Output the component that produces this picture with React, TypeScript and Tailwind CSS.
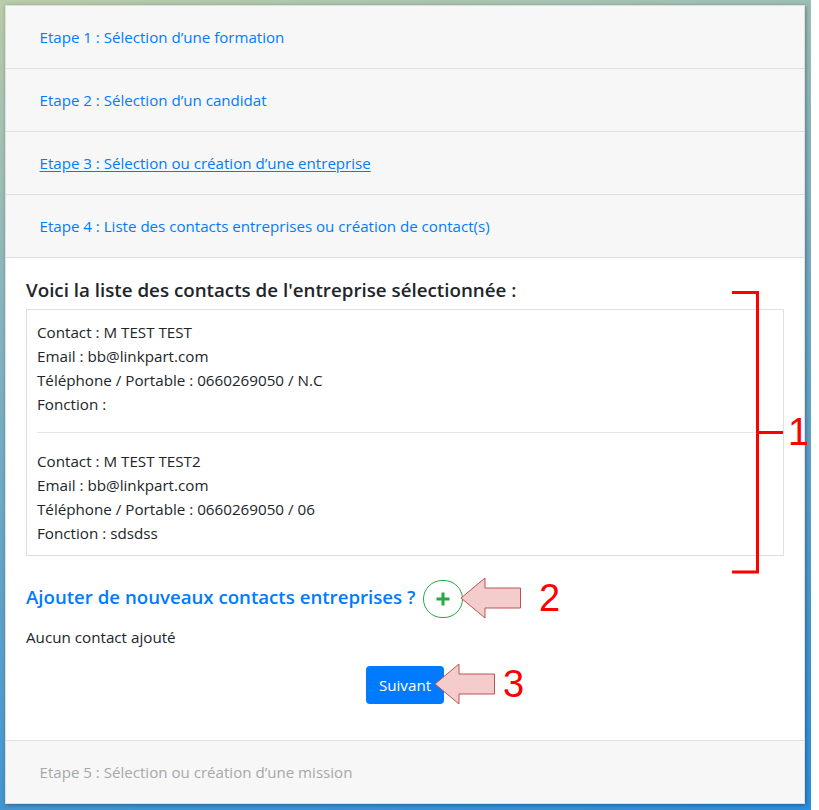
import React from 'react';

const fontClass = "font-['Open_Sans','Noto_Sans',sans-serif]";

const StepHeader: React.FC<{ label: string; underline?: boolean; disabled?: boolean; last?: boolean }> = ({
  label,
  underline,
  disabled,
  last,
}) => (
  <div
    className={`flex h-[63px] items-center bg-[#f7f7f7] pl-[33.5px] text-[15.1px] ${
      last ? 'border-t border-[#dfdfdf]' : 'border-b border-[#dfdfdf]'
    } ${disabled ? 'text-[#a6a8aa]' : 'text-[#007bff]'} ${underline ? 'underline underline-offset-2' : ''}`}
  >
    {label}
  </div>
);

const ContactLines: React.FC<{ lines: string[] }> = ({ lines }) => (
  <div className="flex flex-col">
    {lines.map((line) => (
      <p key={line} className="h-6 text-[15.2px] leading-6 text-[#212529]">
        {line}
      </p>
    ))}
  </div>
);

const Annotations: React.FC = () => (
  <>
    <svg className="absolute left-0 top-0" width="819" height="810" fill="none">
      <path d="M732 292.5H757.5V572H732M757.5 432.5H783" stroke="#ff0000" strokeWidth="3" />
      <path
        d="M461 598L485 578V588H520.5V608H485V618Z"
        fill="#f4cccc"
        stroke="#b85450"
        strokeWidth="1"
      />
      <path
        d="M435 684L459 664V674H494.5V694H459V704Z"
        fill="#f4cccc"
        stroke="#b85450"
        strokeWidth="1"
      />
    </svg>
    <span className="absolute left-[788px] top-[411px] font-['Liberation_Sans',sans-serif] text-[38px] leading-[42px] text-[#ff0000]">
      1
    </span>
    <span className="absolute left-[539px] top-[577px] font-['Liberation_Sans',sans-serif] text-[38px] leading-[42px] text-[#ff0000]">
      2
    </span>
    <span className="absolute left-[503px] top-[663px] font-['Liberation_Sans',sans-serif] text-[38px] leading-[42px] text-[#ff0000]">
      3
    </span>
  </>
);

export default function App() {
  return (
    <div className={`relative h-[810px] w-[819px] bg-white ${fontClass}`}>
      <div className="h-[810px] w-[811px] bg-[linear-gradient(168deg,#b9cca8_0%,#8ab5bd_30%,#3f94d2_85%,#2a8fe0_100%)] pl-[5px] pt-[5px]">
        <div className="flex h-[799px] w-[800px] flex-col border border-[#dfdfdf] bg-white shadow-[1px_1px_4px_rgba(0,0,0,0.35)]">
          <StepHeader label="Etape 1 : Sélection d’une formation" />
          <StepHeader label="Etape 2 : Sélection d’un candidat" />
          <StepHeader label="Etape 3 : Sélection ou création d’une entreprise" underline />
          <StepHeader label="Etape 4 : Liste des contacts entreprises ou création de contact(s)" />
          <div className="flex flex-1 flex-col px-5 pt-5">
            <h5 className="mb-[7px] text-[18.75px] font-semibold leading-6 text-[#212529]">
              Voici la liste des contacts de l'entreprise sélectionnée :
            </h5>
            <div className="border border-[#dfdfdf] p-[10px]">
              <ContactLines
                lines={[
                  'Contact : M TEST TEST',
                  'Email : bb@linkpart.com',
                  'Téléphone / Portable : 0660269050 / N.C',
                  'Fonction :',
                ]}
              />
              <hr className="my-4 border-[#e5e5e5]" />
              <ContactLines
                lines={[
                  'Contact : M TEST TEST2',
                  'Email : bb@linkpart.com',
                  'Téléphone / Portable : 0660269050 / 06',
                  'Fonction : sdsdss',
                ]}
              />
            </div>
            <div className="mt-[24px] flex items-center gap-2">
              <h5 className="mb-1 text-[18.65px] font-semibold leading-6 text-[#007bff]">
                Ajouter de nouveaux contacts entreprises ?
              </h5>
              <button className="flex h-[38px] w-[40px] items-center justify-center rounded-full border border-[#28a745]">
                <svg width="16" height="16" viewBox="0 0 16 16">
                  <path d="M8 1.5V14.5M1.5 8H14.5" stroke="#28a745" strokeWidth="3" />
                </svg>
              </button>
            </div>
            <p className="mt-[7px] h-6 text-[15.2px] leading-6 text-[#212529]">Aucun contact ajouté</p>
            <div className="mt-[17px] flex justify-center">
              <button className="h-[38px] w-[78px] rounded bg-[#007bff] text-[15.2px] text-white">Suivant</button>
            </div>
          </div>
          <StepHeader label="Etape 5 : Sélection ou création d’une mission" disabled last />
        </div>
      </div>
      <Annotations />
    </div>
  );
}
